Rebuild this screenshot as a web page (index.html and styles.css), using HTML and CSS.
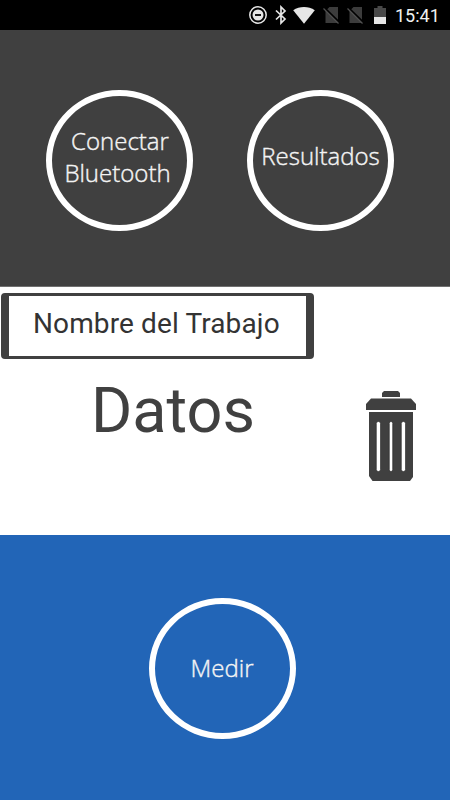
FILE: index.html
```html
<!DOCTYPE html>
<html lang="es">
<head>
    <meta charset="UTF-8">
    <meta name="viewport" content="width=device-width, initial-scale=1.0">
    <title>Medidor</title>
    <link rel="stylesheet" href="styles.css">
</head>
<body>
    <div class="status-bar">
        <svg class="icon-dnd" width="20" height="20" viewBox="0 0 20 20">
            <circle cx="10" cy="10" r="8.2" fill="none" stroke="#e6e6e6" stroke-width="1.5"/>
            <circle cx="10" cy="10" r="5.5" fill="#e6e6e6"/>
            <path d="M7 10h6" stroke="#000" stroke-width="1.8"/>
        </svg>
        <svg class="icon-bluetooth" width="12" height="20" viewBox="0 0 12 20">
            <path d="M1 5.5L10 14L6 18V2l4 4L1 14.5" fill="none" stroke="#e6e6e6" stroke-width="1.7"/>
        </svg>
        <svg class="icon-wifi" width="22" height="20" viewBox="0 0 22 20">
            <path d="M11 18.8L0.2 5.2C6.5 0.8 15.5 0.8 21.8 5.2z" fill="#e6e6e6"/>
        </svg>
        <svg class="icon-sim" width="18" height="20" viewBox="0 0 18 20">
            <path d="M2.5 6L6.5 2H15V18H2.5z" fill="#3c3c3c"/>
            <path d="M1.5 3L17 18" stroke="#000" stroke-width="2"/>
            <path d="M0.5 3.5L15.5 18.5" stroke="#505050" stroke-width="1.2"/>
        </svg>
        <svg class="icon-sim" width="18" height="20" viewBox="0 0 18 20">
            <path d="M2.5 6L6.5 2H15V18H2.5z" fill="#3c3c3c"/>
            <path d="M1.5 3L17 18" stroke="#000" stroke-width="2"/>
            <path d="M0.5 3.5L15.5 18.5" stroke="#505050" stroke-width="1.2"/>
        </svg>
        <svg class="icon-battery" width="12" height="20" viewBox="0 0 12 20">
            <path d="M0 3h3.500V1h5v2H12v9H0z" fill="#484848"/>
            <path d="M0 12h12v7H0z" fill="#e6e6e6"/>
        </svg>
        <span class="clock">15:41</span>
    </div>

    <div class="top-panel">
        <button class="circle"><span class="conectar">Conectar</span><span class="bluetooth">Bluetooth</span></button>
        <button class="circle"><span class="resultados">Resultados</span></button>
    </div>

    <div class="data-panel">
        <div class="job-name">Nombre del Trabajo</div>
        <div class="data-row">
            <h1>Datos</h1>
            <button class="delete">
                <svg width="52" height="92" viewBox="0 0 52 92">
                    <g fill="#404040">
                        <path d="M17 7V3L19 1H33L35 3V7z"/>
                        <path d="M1 20V14L6 8.500H46L51 14V20z"/>
                        <path d="M4 22H48V87L45 91H7.500L4 86z"/>
                    </g>
                    <g fill="#fff" stroke="#222" stroke-width="0.6">
                        <rect x="11.300" y="31.500" width="4.200" height="50" rx="2"/>
                        <rect x="24.300" y="31.500" width="3.400" height="50" rx="1.700"/>
                        <rect x="36.300" y="31.500" width="4.200" height="50" rx="2"/>
                    </g>
                </svg>
            </button>
        </div>
    </div>

    <div class="measure-panel">
        <button class="circle"><span class="medir">Medir</span></button>
    </div>
</body>
</html>
```
FILE: styles.css
```css
* {
    margin: 0;
    padding: 0;
    box-sizing: border-box;
}
body {
    font-family: Roboto, sans-serif;
    background: #fff;
    color: #404040;
    height: 800px;
    overflow: hidden;
}
button {
    background: none;
    border: none;
    cursor: pointer;
}
.status-bar {
    display: flex;
    align-items: center;
    height: 30px;
    padding-left: 248px;
    background: #000;
}
.status-bar svg {
    flex: none;
}
.icon-bluetooth {
    margin-left: 7px;
}
.icon-wifi {
    margin-left: 6px;
}
.icon-sim {
    margin-left: 6px;
}
.icon-sim + .icon-battery {
    margin-left: 9px;
}
.icon-wifi + .icon-sim {
    margin-left: 8px;
}
.clock {
    margin-left: 9px;
    padding-top: 2px;
    font-size: 18px;
    line-height: 20px;
    color: #f0f0f0;
}
.top-panel {
    display: flex;
    gap: 54px;
    height: 257px;
    padding: 60px 0 0 46px;
    background: #404040;
    border-bottom: 1px solid #707070;
}
.circle {
    display: flex;
    flex-direction: column;
    align-items: center;
    width: 147px;
    height: 141px;
    border: 6px solid #fff;
    border-radius: 50%;
    color: #f4f4f4;
    font-family: "Open Sans", "Noto Sans", sans-serif;
    font-size: 24px;
    font-weight: 300;
    line-height: 32px;
    white-space: nowrap;
    -webkit-text-stroke: 0.4px #f4f4f4;
}
.conectar {
    margin-top: 29px;
    margin-left: 1px;
}
.bluetooth {
    margin-right: 4px;
}
.resultados {
    margin-top: 44px;
}
.medir {
    margin-top: 48px;
}
.data-panel {
    height: 248px;
    padding-top: 6px;
}
.job-name {
    width: 313px;
    height: 66px;
    margin-left: 1px;
    padding-left: 24px;
    border: solid #404040;
    border-width: 3px 8px;
    border-radius: 4px;
    font-size: 28px;
    letter-spacing: 0.12px;
    line-height: 56px;
    color: #333;
}
.data-row {
    display: flex;
    justify-content: space-between;
    padding: 15px 33px 0 91px;
}
.data-row h1 {
    font-size: 63px;
    font-weight: 400;
    line-height: 74px;
}
.delete {
    height: 92px;
    margin-top: 16px;
}
.measure-panel {
    display: flex;
    justify-content: center;
    height: 265px;
    padding: 63px 6px 0 0;
    background: #2265b7;
}
```
